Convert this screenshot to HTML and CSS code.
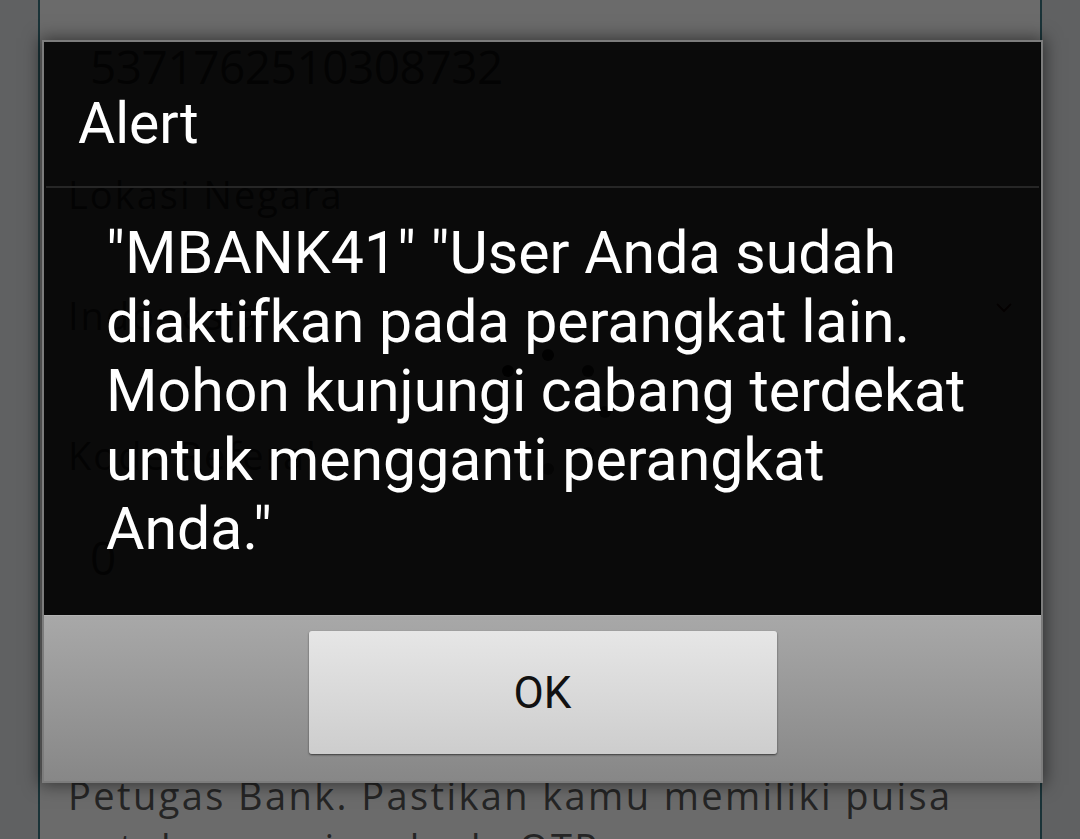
FILE: index.html
```html
<!DOCTYPE html>
<html lang="en">
<head>
    <meta charset="UTF-8">
    <meta name="viewport" content="width=device-width, initial-scale=1.0">
    <title>Aktivasi</title>
    <link rel="stylesheet" href="styles.css">
</head>
<body>
    <div class="page">
        <div class="card">
            <div class="field-value card-no">5371762510308732</div>

            <div class="field-label label-country">Lokasi Negara</div>
            <div class="select-row">
                <span>Indonesia</span>
                <svg class="chevron" width="16" height="10" viewBox="0 0 16 10">
                    <path d="M1 1 L8 8 L15 1" fill="none" stroke="#6b2a2a" stroke-width="2"/>
                </svg>
            </div>

            <div class="field-label label-ref">Kode Referal</div>
            <div class="field-value ref-value">0</div>

            <p class="note">Petugas Bank. Pastikan kamu memiliki puisa untuk menerima kode OTP</p>
        </div>

        <!-- loading spinner behind the dialog -->
        <svg class="spinner" width="130" height="130" viewBox="0 0 130 130">
            <circle cx="65" cy="8" r="6" fill="#000" opacity="0.9"/>
            <circle cx="105" cy="24" r="6" fill="#000" opacity="0.8"/>
            <circle cx="122" cy="65" r="6" fill="#000" opacity="0.7"/>
            <circle cx="105" cy="106" r="6" fill="#000" opacity="0.6"/>
            <circle cx="65" cy="122" r="6" fill="#000" opacity="0.5"/>
            <circle cx="25" cy="106" r="6" fill="#000" opacity="0.35"/>
            <circle cx="8" cy="65" r="6" fill="#000" opacity="0.25"/>
            <circle cx="25" cy="24" r="6" fill="#000" opacity="0.95"/>
        </svg>

        <div class="scrim"></div>

        <div class="dialog">
            <div class="dialog-title">Alert</div>
            <div class="dialog-divider"></div>
            <div class="dialog-message">"MBANK41" "User Anda sudah diaktifkan pada perangkat lain. Mohon kunjungi cabang terdekat untuk mengganti perangkat Anda."</div>
            <div class="dialog-bar">
                <button class="dialog-btn">OK</button>
            </div>
        </div>
    </div>
</body>
</html>
```

FILE: styles.css
```css
body {
    margin: 0;
    padding: 0;
    background: #e4e8ea;
    font-family: Roboto, "Noto Sans", sans-serif;
    overflow: hidden;
}

.page {
    position: relative;
    width: 1080px;
    height: 839px;
    padding: 0 38px;
    box-sizing: border-box;
    overflow: hidden;
}

.card {
    height: 100%;
    background: #fff;
    border-left: 2px solid #3e7b86;
    border-right: 2px solid #3e7b86;
    padding: 0 28px;
    font-family: "Open Sans", "Liberation Sans", sans-serif;
    color: #5a5a5a;
    letter-spacing: 2px;
}

.field-label {
    font-size: 38px;
    line-height: 52px;
}

.field-value {
    font-size: 46px;
    line-height: 60px;
    padding-left: 22px;
    letter-spacing: -0.5px;
}

.card-no {
    padding-top: 36px;
}

.label-country {
    margin-top: 72px;
}

.select-row {
    display: flex;
    justify-content: space-between;
    align-items: center;
    margin-top: 69px;
    font-size: 38px;
    line-height: 52px;
}

.select-row .chevron {
    margin-top: -14px;
}

.label-ref {
    margin-top: 88px;
}

.ref-value {
    margin-top: 46px;
}

.note {
    margin: 182px 0 0;
    font-size: 38px;
    line-height: 52px;
    letter-spacing: 2.4px;
    padding-right: 20px;
}

.spinner {
    position: absolute;
    left: 483px;
    top: 347px;
}

.scrim {
    position: absolute;
    top: 0;
    left: 0;
    right: 0;
    bottom: 0;
    background: rgba(0, 0, 0, 0.58);
}

.dialog {
    position: absolute;
    left: 42px;
    top: 40px;
    width: 1001px;
    height: 743px;
    box-sizing: border-box;
    border: 2px solid #7c7c7c;
    background: rgba(0, 0, 0, 0.9);
    box-shadow: 0 0 16px 2px rgba(0, 0, 0, 0.5);
    display: flex;
    flex-direction: column;
    color: #fff;
}

.dialog-title {
    height: 144px;
    box-sizing: border-box;
    padding: 48px 0 0 34px;
    font-size: 57px;
    line-height: 67px;
}

.dialog-divider {
    height: 2px;
    background: #262626;
    margin: 0 2px;
}

.dialog-message {
    flex: 1;
    padding: 30px 62px 0 62px;
    font-size: 59px;
    line-height: 69px;
}

.dialog-bar {
    height: 166px;
    box-sizing: border-box;
    border-top: 1px solid #b3b3b3;
    background: linear-gradient(#a8a8a8, #878787);
    display: flex;
    justify-content: center;
    padding-top: 15px;
}

.dialog-btn {
    width: 468px;
    height: 123px;
    border: none;
    border-radius: 3px;
    background: linear-gradient(#e6e6e6, #cdcdcd);
    box-shadow: 0 1px 2px rgba(0, 0, 0, 0.6);
    font-family: Roboto, "Noto Sans", sans-serif;
    font-size: 44px;
    color: #111;
    padding: 0;
}
```
